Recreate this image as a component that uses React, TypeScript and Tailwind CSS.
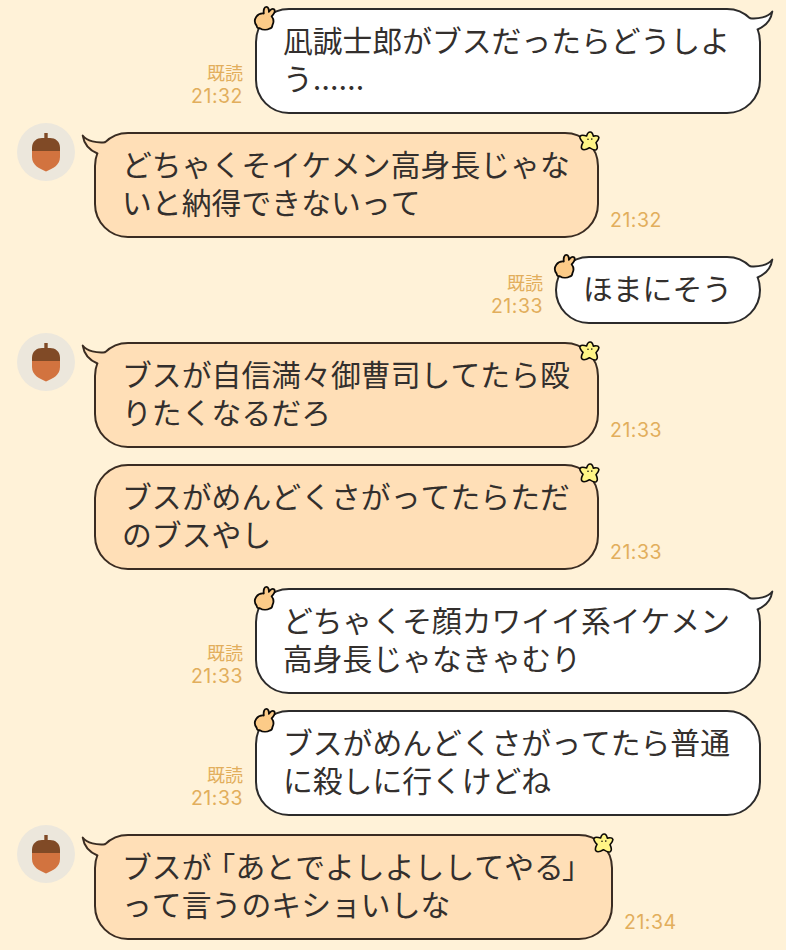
import React from 'react';

interface Message {
  id: number;
  mine: boolean;
  lines: React.ReactNode[];
  time: string;
  // first message of a group carries the tail (and the avatar for the other side)
  first: boolean;
  width: string;
}

const messages: Message[] = [
  {
    id: 1,
    mine: true,
    first: true,
    time: '21:32',
    width: 'w-[506px]',
    lines: ['凪誠士郎がブスだったらどうしよ', <>う<span className="font-['Inter',sans-serif] leading-none">……</span></>],
  },
  { id: 2, mine: false, first: true, time: '21:32', width: 'w-[505px]', lines: ['どちゃくそイケメン高身長じゃな', 'いと納得できないって'] },
  { id: 3, mine: true, first: true, time: '21:33', width: 'w-[206px]', lines: ['ほまにそう'] },
  { id: 4, mine: false, first: true, time: '21:33', width: 'w-[505px]', lines: ['ブスが自信満々御曹司してたら殴', 'りたくなるだろ'] },
  { id: 5, mine: false, first: false, time: '21:33', width: 'w-[505px]', lines: ['ブスがめんどくさがってたらただ', 'のブスやし'] },
  { id: 6, mine: true, first: true, time: '21:33', width: 'w-[506px]', lines: ['どちゃくそ顔カワイイ系イケメン', '高身長じゃなきゃむり'] },
  { id: 7, mine: true, first: false, time: '21:33', width: 'w-[506px]', lines: ['ブスがめんどくさがってたら普通', 'に殺しに行くけどね'] },
  {
    id: 8,
    mine: false,
    first: true,
    time: '21:34',
    width: 'w-[519px]',
    lines: [
      <>ブスが<span className="-ml-[6px]">「</span>あとでよしよししてやる<span className="-ml-[2px]">」</span></>,
      'って言うのキショいしな',
    ],
  },
];

const Acorn = () => (
  <div className="flex h-[58px] w-[58px] items-center justify-center rounded-full bg-[#ece7dc]">
    <svg width="30" height="40" viewBox="0 0 30 40">
      <path d="M13.3 1h3.4v6h-3.4z" fill="#804a26" />
      <path d="M1 19h28v6c0 8-7 11.500-14 14.500C8 36.500 1 33 1 25z" fill="#d2733f" />
      <path d="M1 19v-3C1 9 6 6 11 6h8c5 0 10 3 10 10v3z" fill="#804a26" />
    </svg>
  </div>
);

const Rabbit = () => (
  <svg className="absolute -left-[4px] -top-[5px]" width="26" height="28" viewBox="0 0 26 28">
    <path
      d="M10.800 8.500C10.300 5 11.200 1.900 13.300 1.900c2 0 2.700 2.200 2.600 5C17.300 4.500 19.500 3.200 21 4.300c1.600 1.300.5 4.200-2.400 7 2.300 3 2.300 6.300.8 9-.2 2.200-1 3-2.600 3.200-2.800 1.600-7.200 1.500-10-.3-1.900.2-3-.7-3.200-2.600C1.500 18 1.500 14.300 3.300 11.700 5 9.300 7.800 8.200 10.800 8.500z"
      fill="#fccb88"
      stroke="#0d0a07"
      strokeWidth="1.800"
      strokeLinejoin="round"
    />
  </svg>
);

const Star = () => (
  <svg className="absolute -right-[5px] -top-[4px]" width="24" height="24" viewBox="0 0 24 24">
    <path
      d="M8.600 6C9.400 3.200 10.600 1.900 12.200 2c1.500.1 2.600 1.500 3.100 4.100 2.900-.5 5.100-.3 5.500 1.100.4 1.400-.9 3.400-2.800 5.500 1.400 2.900 1.600 6 .3 7-1.400 1-4-.1-6.900-2-2.800 1.700-6.200 2.400-7.400 1.200-1.100-1.200-.5-3.800 1-6.500C2.800 10 1.300 7.500 2.200 6.200 3.100 4.900 5.600 5 8.600 6z"
      fill="#fff586"
      stroke="#0d0a07"
      strokeWidth="1.600"
      strokeLinejoin="round"
    />
    <circle cx="10" cy="9.300" r="0.800" fill="#0d0a07" />
    <circle cx="13.800" cy="9.100" r="0.800" fill="#0d0a07" />
  </svg>
);

const Tail = ({ mine }: { mine: boolean }) => (
  <svg
    className={mine ? 'absolute -right-[16px] -top-[2px] -scale-x-100' : 'absolute -left-[16px] -top-[2px]'}
    width="36"
    height="32"
    viewBox="-15 0 36 32"
  >
    <path d="M10 10.300C2 11-8 9.500-12.300 3.500-11 12-6 18 2.500 21.500l4 3L16 14z" fill={mine ? '#ffffff' : '#ffdfb7'} />
    <path
      d="M10 10.300C2 11-8 9.500-12.300 3.500-11 12-6 18 2.500 21.500"
      fill="none"
      stroke={mine ? '#2c2b2b' : '#3a2c22'}
      strokeWidth="1.900"
      strokeLinejoin="round"
      strokeLinecap="round"
    />
  </svg>
);

const Bubble = ({ message }: { message: Message }) => {
  const { mine, first, lines, width } = message;
  return (
    <div
      className={`relative shrink-0 rounded-[34px] border-2 pb-4 pl-[26px] pt-[10px] text-[29.800px] leading-[38px] whitespace-nowrap text-[#332f2d] [font-kerning:none] ${width} ${
        mine ? 'border-[#2c2b2b] bg-white' : 'border-[#3a2c22] bg-[#ffdfb7] tracking-[0.060px]'
      }`}
    >
      {first && <Tail mine={mine} />}
      {mine ? <Rabbit /> : <Star />}
      {lines.map((line, i) => (
        <p key={i}>{line}</p>
      ))}
    </div>
  );
};

const Row = ({ message }: { message: Message }) => {
  const { mine, first, time } = message;
  const spacing = first ? 'mt-[18px]' : 'mt-4';

  if (mine) {
    return (
      <div className={`flex items-end justify-end gap-3 pr-[25px] first:mt-0 ${spacing}`}>
        <div className="pb-[6px] text-right leading-6 text-[#e2ae5c]">
          <p className="text-[18px]">既読</p>
          <p className="font-['Inter','Noto_Sans_CJK_JP',sans-serif] text-[19.500px] tracking-[0.500px]">{time}</p>
        </div>
        <Bubble message={message} />
      </div>
    );
  }

  return (
    <div className={`flex items-end pl-[17px] ${spacing}`}>
      <div className="-mt-[9px] w-[77px] shrink-0 self-start">{first && <Acorn />}</div>
      <Bubble message={message} />
      <p className="pb-[6px] pl-[11px] font-['Inter','Noto_Sans_CJK_JP',sans-serif] text-[19.500px] leading-6 tracking-[0.500px] text-[#e2ae5c]">{time}</p>
    </div>
  );
};

const App: React.FC = () => (
  <div className="h-[950px] w-[786px] overflow-hidden bg-[#fff2d8] pt-2 font-['Noto_Sans_CJK_JP',sans-serif]">
    {messages.map((message) => (
      <Row key={message.id} message={message} />
    ))}
  </div>
);

export default App;
